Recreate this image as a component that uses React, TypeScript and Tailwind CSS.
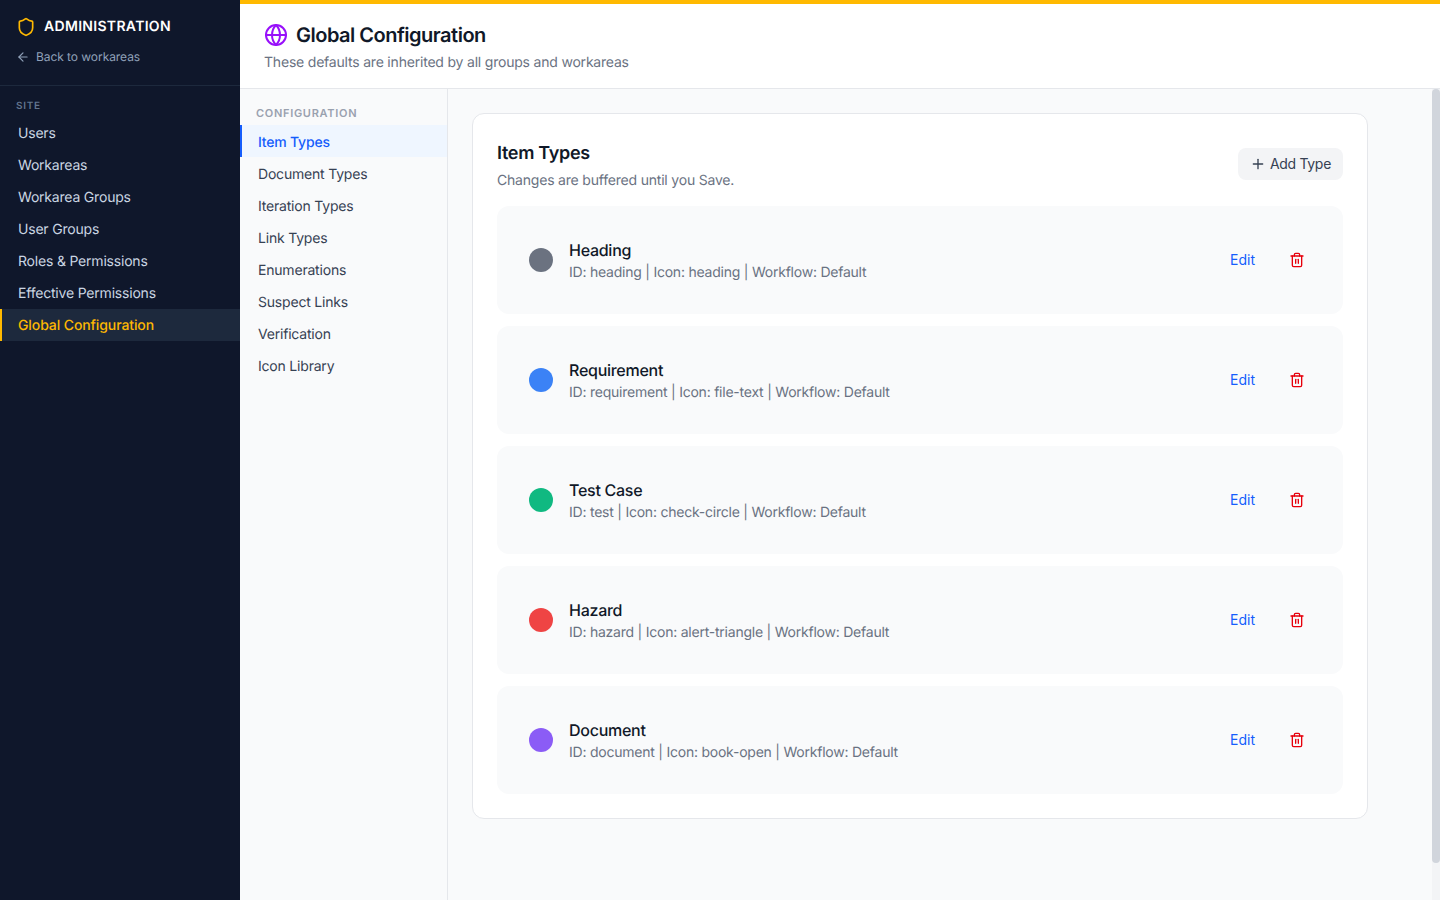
import { ArrowLeft, Globe, Plus, Shield, Trash2 } from 'lucide-react';

const siteLinks = [
  'Users',
  'Workareas',
  'Workarea Groups',
  'User Groups',
  'Roles & Permissions',
  'Effective Permissions',
  'Global Configuration',
];

const configLinks = [
  'Item Types',
  'Document Types',
  'Iteration Types',
  'Link Types',
  'Enumerations',
  'Suspect Links',
  'Verification',
  'Icon Library',
];

const itemTypes = [
  { name: 'Heading', meta: 'ID: heading | Icon: heading | Workflow: Default', dot: 'bg-[#6b7280]' },
  { name: 'Requirement', meta: 'ID: requirement | Icon: file-text | Workflow: Default', dot: 'bg-[#3b82f6]' },
  { name: 'Test Case', meta: 'ID: test | Icon: check-circle | Workflow: Default', dot: 'bg-[#10b981]' },
  { name: 'Hazard', meta: 'ID: hazard | Icon: alert-triangle | Workflow: Default', dot: 'bg-[#ef4444]' },
  { name: 'Document', meta: 'ID: document | Icon: book-open | Workflow: Default', dot: 'bg-[#8b5cf6]' },
];

export default function App() {
  return (
    <div className="flex h-screen overflow-hidden bg-white font-['Inter',sans-serif] tracking-[-0.2px] [text-rendering:geometricPrecision]">
      {/* Admin sidebar */}
      <aside className="flex w-[240px] shrink-0 flex-col bg-slate-900">
        <div className="h-[86px] border-b border-slate-800 px-4 pt-[17px]">
          <div className="flex items-center gap-2">
            <Shield className="h-5 w-5 text-amber-400" />
            <span className="text-sm font-semibold tracking-[0.31px] text-white">ADMINISTRATION</span>
          </div>
          <div className="mt-3 flex items-center gap-1.5 text-xs tracking-[-0.06px] text-slate-400">
            <ArrowLeft className="h-3.5 w-3.5" />
            <span>Back to workareas</span>
          </div>
        </div>
        <div className="pt-3">
          <div className="h-4 px-4 text-[10px] leading-4 font-semibold tracking-[0.75px] text-slate-500">SITE</div>
          <div className="mt-[3px]">
            {siteLinks.map((link) => (
              <div
                key={link}
                className={
                  link === 'Global Configuration'
                    ? 'h-8 border-l-2 border-amber-400 bg-slate-800 pt-px pl-4 text-sm leading-8 font-medium tracking-[-0.1px] text-amber-400'
                    : 'h-8 pt-px pl-[18px] text-sm leading-8 text-slate-300'
                }
              >
                {link}
              </div>
            ))}
          </div>
        </div>
      </aside>

      <div className="flex min-w-0 flex-1 flex-col">
        {/* Page header */}
        <header className="h-[89px] shrink-0 border-t-4 border-b border-t-amber-400 border-b-gray-200 bg-white px-6 pt-[17px]">
          <div className="flex items-center gap-2">
            <Globe className="h-6 w-6 text-purple-600" />
            <h1 className="text-xl leading-7 font-semibold tracking-[-0.5px] text-gray-900">Global Configuration</h1>
          </div>
          <p className="mt-1 text-sm text-gray-500">These defaults are inherited by all groups and workareas</p>
        </header>

        <div className="flex min-h-0 flex-1">
          {/* Config nav */}
          <nav className="w-[208px] shrink-0 border-r border-gray-200 bg-gray-50 pt-4">
            <div className="mb-1 h-4 px-4 text-[11px] leading-4 font-semibold tracking-[0.7px] text-gray-400">CONFIGURATION</div>
            {configLinks.map((link) => (
              <div
                key={link}
                className={
                  link === 'Item Types'
                    ? 'h-8 border-l-2 border-blue-600 bg-blue-50 pt-[2px] pl-4 text-sm leading-8 font-medium text-blue-600'
                    : 'h-8 pt-[2px] pl-[18px] text-sm leading-8 text-gray-700'
                }
              >
                {link}
              </div>
            ))}
          </nav>

          {/* Main content */}
          <main className="min-w-0 flex-1 overflow-hidden bg-gray-50">
            <div className="px-6 pt-6">
              <section className="w-[896px] rounded-xl border border-gray-200 bg-white p-6">
                <div className="mb-[15px] flex items-start justify-between">
                  <div className="pt-[2px]">
                    <h2 className="text-lg leading-7 font-semibold tracking-[-0.3px] text-gray-900">Item Types</h2>
                    <p className="mt-[3px] text-sm leading-5 text-gray-500">Changes are buffered until you Save.</p>
                  </div>
                  <button className="mt-[10px] flex h-8 items-center gap-1 rounded-lg bg-gray-100 px-3 text-sm tracking-[-0.3px] text-gray-700">
                    <Plus className="h-4 w-4" />
                    Add Type
                  </button>
                </div>
                <div className="flex flex-col gap-3">
                  {itemTypes.map((item) => (
                    <div key={item.name} className="flex h-[108px] items-center rounded-xl bg-gray-50 px-8">
                      <span className={`h-6 w-6 rounded-full ${item.dot}`}></span>
                      <div className="ml-4 flex-1">
                        <div className="text-base leading-6 font-medium tracking-[-0.27px] text-gray-900">{item.name}</div>
                        <div className="mt-px text-sm leading-5 tracking-[-0.23px] text-gray-500">{item.meta}</div>
                      </div>
                      <button className="text-sm tracking-[0px] text-blue-600">Edit</button>
                      <button className="mr-[6px] ml-[34px] text-red-600">
                        <Trash2 className="h-4 w-4" />
                      </button>
                    </div>
                  ))}
                </div>
              </section>
            </div>
          </main>

          {/* Scrollbar */}
          <div className="w-2 shrink-0 bg-gray-100">
            <div className="h-[774px] w-2 rounded-full bg-gray-300"></div>
          </div>
        </div>
      </div>
    </div>
  );
}
